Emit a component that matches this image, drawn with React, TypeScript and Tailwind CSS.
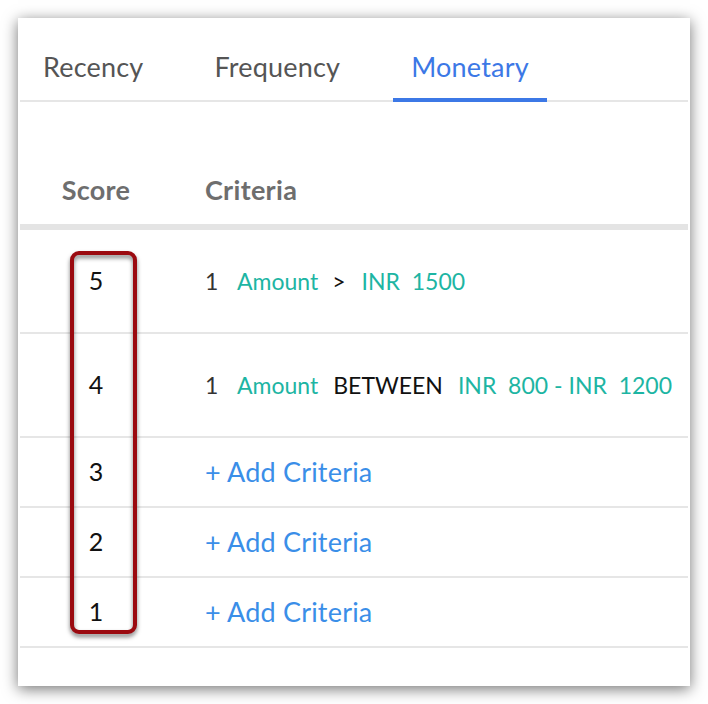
import React from "react";

const teal = "text-[#1db5a3]";

function Row({ score, children, tall }: { score: string; children: React.ReactNode; tall?: boolean }) {
  return (
    <div className={`flex items-center border-b-2 border-[#e6e6e6] ${tall ? "h-[104px]" : "h-[70px]"}`}>
      <div className="w-[152px] text-center text-[25px] text-[#111]">{score}</div>
      <div className="pl-[33px] flex items-center">{children}</div>
    </div>
  );
}

function AddCriteria() {
  return <span className="text-[27px] tracking-[0.2px] text-[#3a8ee8]">+ Add Criteria</span>;
}

export default function App() {
  return (
    <div className="w-[708px] h-[704px] bg-white p-[18px]" style={{ fontFamily: "Lato, 'Open Sans', sans-serif" }}>
      <div className="relative w-[672px] h-[668px] bg-white shadow-[0_3px_14px_rgba(0,0,0,0.55)]">
        <div className="mx-[2px]">
          {/* Tabs */}
          <div className="flex h-[84px] border-b-2 border-[#e6e6e6] pl-[5px] gap-[35px]">
            {["Recency", "Frequency", "Monetary"].map((t) => {
              const active = t === "Monetary";
              return (
                <div key={t} className="relative flex items-center pt-[16px] px-[18px]">
                  <span className={`text-[27px] tracking-[0.2px] ${active ? "text-[#3c78e6]" : "text-[#555]"}`}>{t}</span>
                  {active && <div className="absolute left-0 right-0 bottom-[-2px] h-[4px] bg-[#3c78e6]" />}
                </div>
              );
            })}
          </div>
          {/* Header */}
          <div className="flex items-center h-[128px] pt-[54px] border-b-[6px] border-[#e4e4e4]">
            <div className="w-[152px] text-center text-[27px] tracking-[0.3px] font-bold text-[#6e6e6e]">Score</div>
            <div className="pl-[33px] text-[27px] tracking-[0.3px] font-bold text-[#6e6e6e]">Criteria</div>
          </div>
          {/* Rows */}
          <Row score="5" tall>
            <div className="flex items-center text-[23px]">
              <span className="w-[32px] text-[#333]">1</span>
              <span className={`${teal} mr-[14px]`}>Amount</span>
              <span className="text-[#111] mr-[16px]">&gt;</span>
              <span className={teal}>INR&nbsp;&nbsp;1500</span>
            </div>
          </Row>
          <Row score="4" tall>
            <div className="flex items-center text-[23px]">
              <span className="w-[32px] text-[#333]">1</span>
              <span className={`${teal} mr-[15px]`}>Amount</span>
              <span className="text-[#111] mr-[15px]">BETWEEN</span>
              <span className={teal}>INR&nbsp;&nbsp;800&nbsp;-&nbsp;INR&nbsp;&nbsp;1200</span>
            </div>
          </Row>
          <Row score="3">
            <AddCriteria />
          </Row>
          <Row score="2">
            <AddCriteria />
          </Row>
          <Row score="1">
            <AddCriteria />
          </Row>
        </div>
        {/* Annotation box */}
        <div className="absolute left-[52px] top-[233px] w-[67px] h-[383px] rounded-[9px] border-[4px] border-[#9b0a10] drop-shadow-[0_3px_2px_rgba(0,0,0,0.5)]" />
      </div>
    </div>
  );
}
